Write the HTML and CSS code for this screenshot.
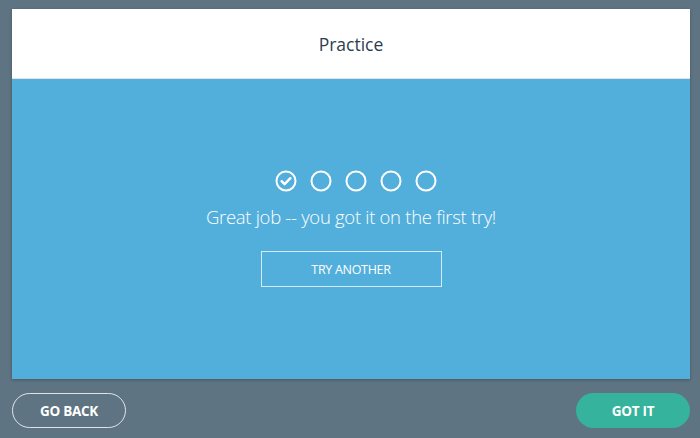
FILE: index.html
```html
<!DOCTYPE html>
<html>
<head>
<meta charset="utf-8">
<link rel="stylesheet" href="styles.css">
</head>
<body>
<div class="app">
  <div class="card">
    <header class="card-header">Practice</header>
    <main class="card-body">
      <div class="progress">
        <svg class="dot" viewBox="0 0 24 24" width="24" height="24"><circle cx="12" cy="12" r="9.5" fill="none" stroke="#fff" stroke-width="2"/><path d="M7.6 12.2l3 3 5.8-6" fill="none" stroke="#fff" stroke-width="2.4" stroke-linecap="round" stroke-linejoin="round"/></svg>
        <svg class="dot" viewBox="0 0 24 24" width="24" height="24"><circle cx="12" cy="12" r="9.5" fill="none" stroke="#fff" stroke-width="2"/></svg>
        <svg class="dot" viewBox="0 0 24 24" width="24" height="24"><circle cx="12" cy="12" r="9.5" fill="none" stroke="#fff" stroke-width="2"/></svg>
        <svg class="dot" viewBox="0 0 24 24" width="24" height="24"><circle cx="12" cy="12" r="9.5" fill="none" stroke="#fff" stroke-width="2"/></svg>
        <svg class="dot" viewBox="0 0 24 24" width="24" height="24"><circle cx="12" cy="12" r="9.5" fill="none" stroke="#fff" stroke-width="2"/></svg>
      </div>
      <p class="message">Great job -- you got it on the first try!</p>
      <button class="try-btn">TRY ANOTHER</button>
    </main>
  </div>
  <footer class="footer">
    <button class="back-btn">GO BACK</button>
    <button class="got-btn">GOT IT</button>
  </footer>
</div>
</body>
</html>
```
FILE: styles.css
```css
html, body {
  margin: 0;
  padding: 0;
  background: #5e7482;
  font-family: "Open Sans", "Liberation Sans", sans-serif;
}
.app {
  width: 700px;
  height: 438px;
  box-sizing: border-box;
  padding: 9px 10px 0 12px;
  display: flex;
  flex-direction: column;
}
.card {
  width: 678px;
  box-shadow: 0 1px 3px rgba(0,0,0,0.25);
}
.card-header {
  height: 70px;
  background: #fff;
  color: #2c3e50;
  font-size: 17.5px;
  display: flex;
  align-items: center;
  justify-content: center;
  border-bottom: 1px solid #dfe6ea;
  box-sizing: border-box;
}
.card-body {
  height: 300px;
  background: #52afdb;
  display: flex;
  flex-direction: column;
  align-items: center;
  padding-top: 90px;
  box-sizing: border-box;
}
.progress {
  display: flex;
  gap: 11px;
  padding-left: 10px;
}
.dot {
  display: block;
}
.message {
  margin: 11px 0 0;
  color: #fff;
  font-size: 18.5px;
  font-weight: 300;
  letter-spacing: -0.3px;
  line-height: 26px;
}
.try-btn {
  margin-top: 21px;
  width: 181px;
  height: 36px;
  background: transparent;
  border: 1px solid rgba(255,255,255,0.75);
  color: #fff;
  font-family: "Open Sans", "Liberation Sans", sans-serif;
  font-size: 12.5px;
  font-weight: 400;
  letter-spacing: -0.3px;
  padding: 0;
}
.footer {
  display: flex;
  justify-content: space-between;
  margin-top: 14px;
}
.back-btn, .got-btn {
  width: 114px;
  height: 35px;
  border-radius: 18px;
  font-family: "Open Sans", "Liberation Sans", sans-serif;
  font-weight: 700;
  font-size: 13.5px;
  color: #fff;
  padding: 0;
  letter-spacing: -0.3px;
}
.back-btn {
  background: transparent;
  border: 1px solid rgba(255,255,255,0.8);
}
.got-btn {
  background: #35b39c;
  border: none;
}
```
